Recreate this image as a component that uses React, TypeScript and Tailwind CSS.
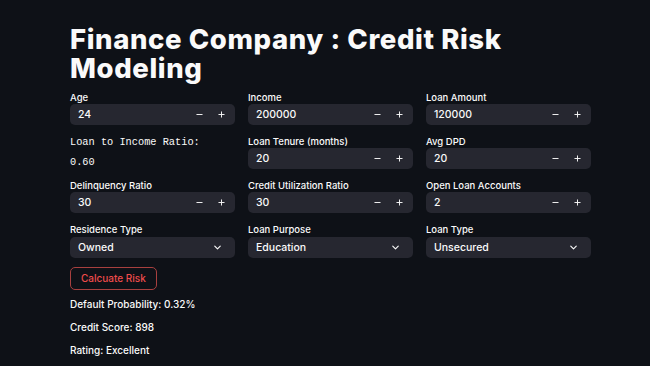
import { ChevronDown, Minus, Plus } from "lucide-react";

const SANS = "font-['Inter','Noto_Sans',sans-serif]";

function NumberInput({ label, value }: { label: string; value: string }) {
  return (
    <div className="flex flex-col">
      <label className="h-[13px] text-[9.5px] font-medium leading-[13px] text-[#fafafa]">{label}</label>
      <div className="flex h-[21px] items-center rounded-[5px] bg-[#262730]">
        <span className="flex-1 pl-[8px] text-[10.5px] font-medium text-[#fafafa]">{value}</span>
        <span className="flex w-[22px] justify-center text-[#fafafa]">
          <Minus size={9} strokeWidth={2.5} />
        </span>
        <span className="mr-[3px] flex w-[22px] justify-center text-[#fafafa]">
          <Plus size={9} strokeWidth={2.5} />
        </span>
      </div>
    </div>
  );
}

function SelectBox({ label, value }: { label: string; value: string }) {
  return (
    <div className="flex flex-col">
      <label className="h-[14px] text-[9.5px] font-medium leading-[14px] text-[#fafafa]">{label}</label>
      <div className="flex h-[21px] items-center rounded-[5px] bg-[#262730]">
        <span className="flex-1 pl-[8px] text-[10.5px] font-medium text-[#fafafa]">{value}</span>
        <span className="mr-[12px] text-[#fafafa]">
          <ChevronDown size={11} strokeWidth={2.5} />
        </span>
      </div>
    </div>
  );
}

export default function App() {
  return (
    <div className={`min-h-[366px] w-[650px] bg-[#0e1117] ${SANS}`}>
      <div className="ml-[70px] flex w-[521px] flex-col pt-[25px]">
        <h1 className="text-[27.5px] font-extrabold leading-[29px] tracking-[0.6px] text-[#fafafa]">
          Finance Company : Credit Risk Modeling
        </h1>

        <div className="mt-[8px] grid grid-cols-3 gap-x-[13px] gap-y-[10px]">
          <NumberInput label="Age" value="24" />
          <NumberInput label="Income" value="200000" />
          <NumberInput label="Loan Amount" value="120000" />

          <div className="flex flex-col font-['Liberation_Mono',monospace] text-[10.3px] text-[#fafafa]">
            <span className="mt-[1px] leading-[13px]">Loan to Income Ratio:</span>
            <span className="mt-[7px] leading-[13px]">0.60</span>
          </div>
          <NumberInput label="Loan Tenure (months)" value="20" />
          <NumberInput label="Avg DPD" value="20" />

          <NumberInput label="Delinquency Ratio" value="30" />
          <NumberInput label="Credit Utilization Ratio" value="30" />
          <NumberInput label="Open Loan Accounts" value="2" />

          <SelectBox label="Residence Type" value="Owned" />
          <SelectBox label="Loan Purpose" value="Education" />
          <SelectBox label="Loan Type" value="Unsecured" />
        </div>

        <div className="mt-[9px] flex">
          <button className="h-[23px] rounded-[5px] border border-[#a8403f] px-[10px] text-[10px] font-medium text-[#ef4b4b]">
            Calcuate Risk
          </button>
        </div>

        <div className="mt-[3px] flex flex-col text-[10px] font-medium leading-[23px] text-[#fafafa]">
          <p>Default Probability: 0.32%</p>
          <p>Credit Score: 898</p>
          <p>Rating: Excellent</p>
        </div>
      </div>
    </div>
  );
}
